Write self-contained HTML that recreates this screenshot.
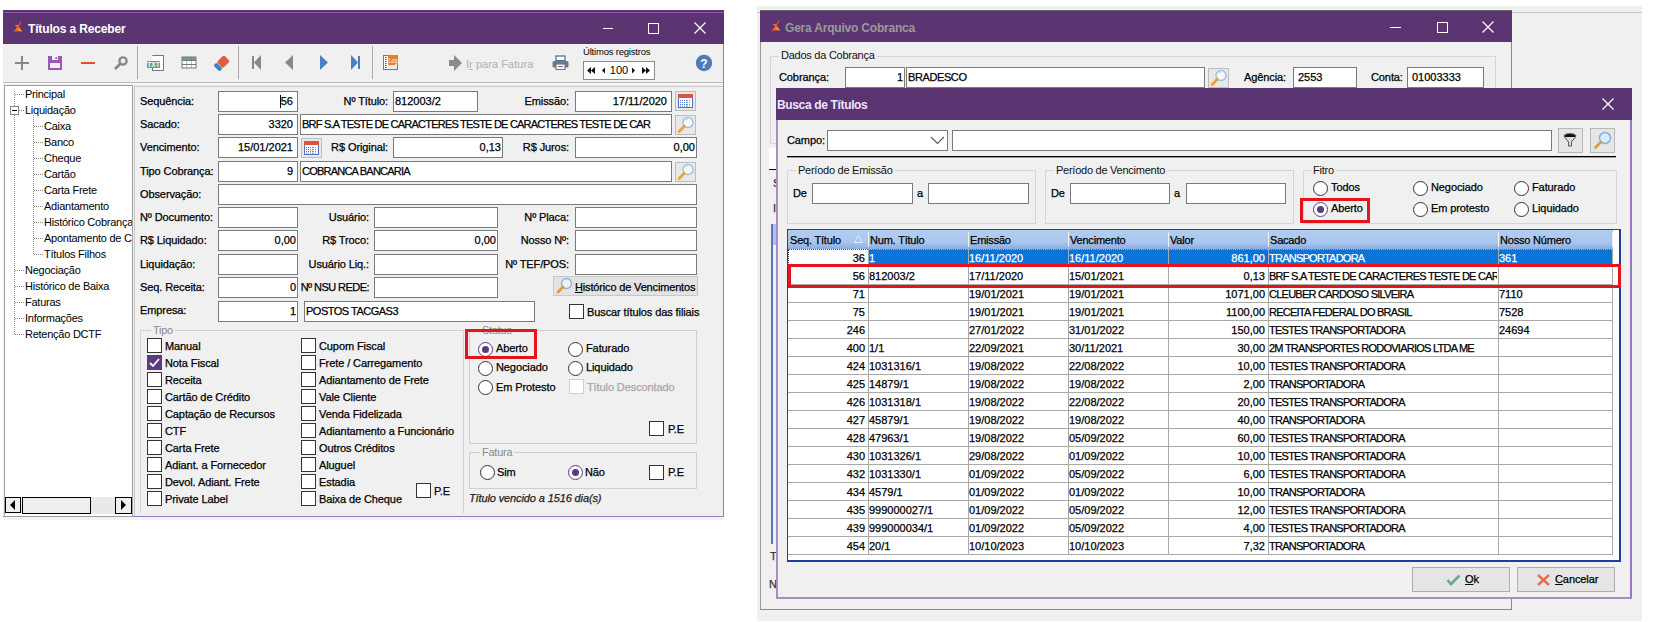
<!DOCTYPE html><html><head><meta charset="utf-8"><style>
*{box-sizing:content-box}
body{margin:0;width:1659px;height:622px;position:relative;overflow:hidden;background:#fff;font-family:"Liberation Sans",sans-serif;font-size:11px;color:#000}
.a{position:absolute}
.t{white-space:pre;line-height:21px;letter-spacing:-0.1px;-webkit-text-stroke:0.25px currentColor}
.inp{background:#fff;border:1px solid #7a7a7a;line-height:19px;white-space:pre;overflow:hidden;letter-spacing:-0.25px;-webkit-text-stroke:0.25px #000}
.cb{position:absolute;width:13px;height:13px;border:1px solid #333;background:#fff}
.rd{position:absolute;width:13px;height:13px;border:1px solid #333;border-radius:50%;background:#fff}
.rd.on{border-color:#5b3a80}
.rd.on:after{content:"";position:absolute;left:3px;top:3px;width:7px;height:7px;border-radius:50%;background:#5b3a80}
.gb{position:absolute;border:1px solid #d5d5d5}
.gt{position:absolute;background:#f0f0f0;padding:0 2px;line-height:13px;white-space:pre;letter-spacing:-0.25px}
.up{letter-spacing:-0.7px}
</style></head><body>

<div class="a" style="left:3px;top:10px;width:721px;height:507px;background:#f0f0f0"></div>
<div class="a" style="left:3px;top:10px;width:721px;height:34px;background:#5b3571"></div>
<div class="a" style="left:723px;top:44px;width:1px;height:473px;background:#9b7cc2"></div>
<div class="a" style="left:3px;top:516px;width:721px;height:1px;background:#9b7cc2"></div>
<div class="a" style="left:3px;top:517px;width:721px;height:3px;background:#f3f3f3"></div>
<svg class="a" style="left:8px;top:17px" width="20" height="20" viewBox="0 0 20 20"><defs><linearGradient id="lg" x1="0" y1="0" x2="1" y2="0"><stop offset="0" stop-color="#e8402a"/><stop offset="0.45" stop-color="#f06a2a"/><stop offset="1" stop-color="#f8c02a"/></linearGradient></defs><path d="M10.9 10 L14.2 14.6 Q10 13.7 5.2 15.2 L9.4 9.8 Z" fill="url(#lg)"/><path d="M13 3.8 L13.6 4.4 L10.6 10.6 L8.6 10.6 Z" fill="#ee4a2a"/><path d="M6.8 8.4 L9.8 8.2 L9.2 10 Z" fill="#f6b82a"/></svg>
<div class="a" style="left:3px;top:12px;width:721px;height:1px;background:#8a5db0"></div>
<div class="a" style="left:28px;top:21px;font:bold 12px 'Liberation Sans';color:#fff;letter-spacing:-0.15px;line-height:17px;white-space:pre">Títulos a Receber</div>
<div class="a" style="left:603px;top:28px;width:10px;height:1px;background:#fff"></div>
<div class="a" style="left:648px;top:23px;width:9px;height:9px;border:1px solid #fff"></div>
<svg class="a" style="left:694px;top:22px" width="12" height="12"><path d="M0.5 0.5 L11.5 11.5 M11.5 0.5 L0.5 11.5" stroke="#fff" stroke-width="1.2"/></svg>
<div class="a" style="left:137px;top:46px;width:1px;height:33px;background:#a9a9a9"></div>
<div class="a" style="left:238px;top:46px;width:1px;height:33px;background:#a9a9a9"></div>
<div class="a" style="left:372px;top:46px;width:1px;height:33px;background:#a9a9a9"></div>
<div class="a" style="left:3px;top:82px;width:720px;height:1px;background:#b9b9b9"></div>
<div class="a" style="left:3px;top:83px;width:720px;height:1px;background:#fbfbfb"></div>
<div class="a" style="left:15px;top:62px;width:14px;height:2px;background:#888"></div>
<div class="a" style="left:21px;top:56px;width:2px;height:14px;background:#888"></div>
<svg class="a" style="left:48px;top:56px" width="14" height="14" viewBox="0 0 14 14"><path d="M0 0H14V14H0Z M2 7V12H12V7Z M4 0V4H10V0Z" fill="#9b59b6" fill-rule="evenodd"/><rect x="7.5" y="1" width="1.5" height="2" fill="#9b59b6"/></svg>
<div class="a" style="left:81px;top:62px;width:14px;height:2px;background:#e0522b"></div>
<svg class="a" style="left:113px;top:55px" width="16" height="16" viewBox="0 0 16 16"><circle cx="10" cy="6" r="3.6" fill="none" stroke="#888" stroke-width="2.4"/><path d="M7.5 8.5 L2 14" stroke="#888" stroke-width="2.6"/></svg>
<svg class="a" style="left:147px;top:55px" width="18" height="17" viewBox="0 0 18 17"><path d="M5.5 0.5H16.5V15.5H5.5" fill="#fff" stroke="#777" stroke-width="1"/><rect x="5" y="1" width="11" height="14" fill="#fff"/><path d="M5.5 0.5H16.5V15.5H5.5V13" fill="none" stroke="#777"/><rect x="0" y="6" width="13" height="7" fill="#5fa58a"/><text x="6.5" y="12" font-family="Liberation Sans" font-weight="bold" font-size="6.5" fill="#fff" text-anchor="middle">TXT</text></svg>
<svg class="a" style="left:181px;top:56px" width="16" height="13" viewBox="0 0 16 13"><rect x="0.5" y="0.5" width="15" height="12" fill="#777"/><rect x="1.5" y="1.5" width="4" height="2.5" fill="#6aa88e"/><rect x="6" y="1.5" width="4" height="2.5" fill="#6aa88e"/><rect x="10.5" y="1.5" width="4" height="2.5" fill="#6aa88e"/><rect x="1.5" y="5" width="4" height="3" fill="#fff"/><rect x="6" y="5" width="4" height="3" fill="#fff"/><rect x="10.5" y="5" width="4" height="3" fill="#fff"/><rect x="1.5" y="9" width="4" height="2.5" fill="#fff"/><rect x="6" y="9" width="4" height="2.5" fill="#fff"/><rect x="10.5" y="9" width="4" height="2.5" fill="#fff"/></svg>
<svg class="a" style="left:214px;top:56px" width="16" height="15" viewBox="0 0 16 15"><g transform="translate(7.8 7.2) rotate(-45)"><rect x="-2.8" y="-4.3" width="10" height="8.6" rx="1.8" fill="#dd6040"/><rect x="-7.6" y="-4.3" width="4.3" height="8.6" rx="1.4" fill="#3f7fc0"/></g></svg>
<svg class="a" style="left:251px;top:55px" width="11" height="16"><rect x="1" y="1" width="2" height="13" fill="#888"/><path d="M10 0 L3 7.5 L10 15 Z" fill="#888"/></svg>
<svg class="a" style="left:284px;top:55px" width="10" height="16"><path d="M9 0 L1 7.5 L9 15 Z" fill="#888"/></svg>
<svg class="a" style="left:319px;top:55px" width="10" height="16"><path d="M1 0 L9 7.5 L1 15 Z" fill="#4a80c0"/></svg>
<svg class="a" style="left:350px;top:55px" width="11" height="16"><path d="M1 0 L8 7.5 L1 15 Z" fill="#4a80c0"/><rect x="8" y="1" width="2" height="13" fill="#4a80c0"/></svg>
<svg class="a" style="left:383px;top:55px" width="15" height="15"><rect x="0.5" y="0.5" width="14" height="14" fill="#fff" stroke="#5a78c0"/><rect x="5" y="10" width="9" height="4" fill="#e2eaf6"/><path d="M2 2.5 H3.5 M2 4.5 H3.5 M2 6.5 H3.5 M2 8.5 H3.5 M2 10.5 H3.5 M2 12.5 H3.5" stroke="#3a58a8"/><rect x="5" y="0" width="10" height="10" rx="1" fill="#e8801e"/><text x="5.6" y="7.6" font-family="Liberation Sans" font-size="7" fill="#fff" textLength="8.8" lengthAdjust="spacingAndGlyphs">Log</text></svg>
<svg class="a" style="left:449px;top:55px" width="14" height="17"><path d="M0 5 H5 V0 L13 8 L5 16 V11 H0 Z" fill="#8a8a8a"/></svg>
<div class="a t" style="left:466px;top:54px;color:#b4b4b4;letter-spacing:0.05px;-webkit-text-stroke:0.1px #b4b4b4">I<u>r</u> para Fatura</div>
<svg class="a" style="left:552px;top:55px" width="17" height="15"><rect x="4" y="1" width="9" height="6" fill="#fff" stroke="#777" stroke-width="1.4"/><rect x="4" y="5" width="9" height="1.5" fill="#3a72b8"/><rect x="0.5" y="6" width="16" height="6.5" rx="1.5" fill="#777"/><rect x="4" y="9" width="9" height="5.5" fill="#fff" stroke="#777" stroke-width="1.2"/><rect x="6" y="11" width="5" height="1" fill="#3a72b8"/></svg>
<div class="a" style="left:583px;top:46px;font-size:9.5px;line-height:12px;white-space:pre;letter-spacing:-0.2px">Últimos registros</div>
<div class="a" style="left:583px;top:61px;width:70px;height:17px;background:#fff;border:1px solid #8a8a8a"></div>
<div class="a" style="left:584px;top:62px;width:70px;height:17px;line-height:17px;font-size:11px;text-align:center;white-space:pre">   100   </div>
<svg class="a" style="left:585px;top:66px" width="68" height="9"><path d="M2 4.5 L6 1 V8Z M6 4.5 L10 1 V8Z M17 4.5 L20 1.5 V7.5Z M47 1.5 L50 4.5 L47 7.5Z M57 1 L61 4.5 L57 8Z M61 1 L65 4.5 L61 8Z" fill="#111"/></svg>
<svg class="a" style="left:695px;top:54px" width="18" height="18"><circle cx="9" cy="9" r="8.2" fill="#4a7db8"/><text x="9" y="13.5" font-family="Liberation Sans" font-weight="bold" font-size="12" fill="#fff" text-anchor="middle">?</text></svg>
<div class="a" style="left:4px;top:85px;width:127px;height:430px;background:#fff;border:1px solid #a0a0a0"></div>
<div class="a" style="left:5px;top:86px;width:127px;height:411px;overflow:hidden">
<div class="a" style="left:20px;top:0px;line-height:16px;white-space:pre;letter-spacing:-0.25px">Principal</div>
<div class="a" style="left:20px;top:16px;line-height:16px;white-space:pre;letter-spacing:-0.25px">Liquidação</div>
<div class="a" style="left:39px;top:32px;line-height:16px;white-space:pre;letter-spacing:-0.25px">Caixa</div>
<div class="a" style="left:39px;top:48px;line-height:16px;white-space:pre;letter-spacing:-0.25px">Banco</div>
<div class="a" style="left:39px;top:64px;line-height:16px;white-space:pre;letter-spacing:-0.25px">Cheque</div>
<div class="a" style="left:39px;top:80px;line-height:16px;white-space:pre;letter-spacing:-0.25px">Cartão</div>
<div class="a" style="left:39px;top:96px;line-height:16px;white-space:pre;letter-spacing:-0.25px">Carta Frete</div>
<div class="a" style="left:39px;top:112px;line-height:16px;white-space:pre;letter-spacing:-0.25px">Adiantamento</div>
<div class="a" style="left:39px;top:128px;line-height:16px;white-space:pre;letter-spacing:-0.25px">Histórico Cobrança</div>
<div class="a" style="left:39px;top:144px;line-height:16px;white-space:pre;letter-spacing:-0.25px">Apontamento de Contas</div>
<div class="a" style="left:39px;top:160px;line-height:16px;white-space:pre;letter-spacing:-0.25px">Títulos Filhos</div>
<div class="a" style="left:20px;top:176px;line-height:16px;white-space:pre;letter-spacing:-0.25px">Negociação</div>
<div class="a" style="left:20px;top:192px;line-height:16px;white-space:pre;letter-spacing:-0.25px">Histórico de Baixa</div>
<div class="a" style="left:20px;top:208px;line-height:16px;white-space:pre;letter-spacing:-0.25px">Faturas</div>
<div class="a" style="left:20px;top:224px;line-height:16px;white-space:pre;letter-spacing:-0.25px">Informações</div>
<div class="a" style="left:20px;top:240px;line-height:16px;white-space:pre;letter-spacing:-0.25px">Retenção DCTF</div>
<svg class="a" style="left:0;top:0" width="127" height="411">
<path d="M9.5 5 V248" stroke="#888" stroke-dasharray="1 1" fill="none"/>
<path d="M28.5 29 V168" stroke="#888" stroke-dasharray="1 1" fill="none"/>
<path d="M10 8.5 H19" stroke="#888" stroke-dasharray="1 1"/>
<path d="M10 24.5 H19" stroke="#888" stroke-dasharray="1 1"/>
<path d="M29 40.5 H38" stroke="#888" stroke-dasharray="1 1"/>
<path d="M29 56.5 H38" stroke="#888" stroke-dasharray="1 1"/>
<path d="M29 72.5 H38" stroke="#888" stroke-dasharray="1 1"/>
<path d="M29 88.5 H38" stroke="#888" stroke-dasharray="1 1"/>
<path d="M29 104.5 H38" stroke="#888" stroke-dasharray="1 1"/>
<path d="M29 120.5 H38" stroke="#888" stroke-dasharray="1 1"/>
<path d="M29 136.5 H38" stroke="#888" stroke-dasharray="1 1"/>
<path d="M29 152.5 H38" stroke="#888" stroke-dasharray="1 1"/>
<path d="M29 168.5 H38" stroke="#888" stroke-dasharray="1 1"/>
<path d="M10 184.5 H19" stroke="#888" stroke-dasharray="1 1"/>
<path d="M10 200.5 H19" stroke="#888" stroke-dasharray="1 1"/>
<path d="M10 216.5 H19" stroke="#888" stroke-dasharray="1 1"/>
<path d="M10 232.5 H19" stroke="#888" stroke-dasharray="1 1"/>
<path d="M10 248.5 H19" stroke="#888" stroke-dasharray="1 1"/>
<rect x="5.5" y="20.5" width="8" height="8" fill="#fff" stroke="#888"/><path d="M7 24.5 H12" stroke="#000"/>
</svg></div>
<div class="a" style="left:5px;top:497px;width:126px;height:17px;background:#f4f4f4"></div>
<div class="a" style="left:5px;top:497px;width:16px;height:16px;background:#efefef;border:1px solid #000;box-sizing:border-box"></div>
<div class="a" style="left:22px;top:497px;width:69px;height:17px;background:#efefef;border:1.5px solid #000;box-sizing:border-box"></div>
<div class="a" style="left:91px;top:497px;width:24px;height:17px;background:#e9e9e9"></div>
<div class="a" style="left:115px;top:497px;width:17px;height:17px;background:#efefef;border:1px solid #000;box-sizing:border-box"></div>
<svg class="a" style="left:10px;top:500px" width="6" height="10"><path d="M5 0 L0 5 L5 10Z" fill="#000"/></svg>
<svg class="a" style="left:121px;top:500px" width="6" height="10"><path d="M0 0 L5 5 L0 10Z" fill="#000"/></svg>
<div class="a" style="left:134px;top:86px;width:588px;height:429px;border-left:1px solid #c8c8c8;border-top:1px solid #c8c8c8"></div>
<div class="a t" style="left:140px;top:91px;">Sequência:</div>
<div class="a inp" style="left:218px;top:91px;width:78px;height:19px;text-align:right;"><span style="padding-right:4px;letter-spacing:0">56</span></div>
<div class="a t" style="left:140px;top:114px;">Sacado:</div>
<div class="a inp" style="left:218px;top:114px;width:78px;height:19px;text-align:right;"><span style="padding-right:4px;letter-spacing:0">3320</span></div>
<div class="a t" style="left:140px;top:137px;">Vencimento:</div>
<div class="a inp" style="left:218px;top:137px;width:78px;height:19px;text-align:right;"><span style="padding-right:4px;letter-spacing:0">15/01/2021</span></div>
<div class="a t" style="left:140px;top:161px;">Tipo Cobrança:</div>
<div class="a inp" style="left:218px;top:161px;width:78px;height:19px;text-align:right;"><span style="padding-right:4px;letter-spacing:0">9</span></div>
<div class="a t" style="left:140px;top:184px;">Observação:</div>
<div class="a t" style="left:140px;top:207px;">Nº Documento:</div>
<div class="a inp" style="left:218px;top:207px;width:78px;height:19px;text-align:right;"><span style="padding-right:1px;"></span></div>
<div class="a t" style="left:140px;top:230px;">R$ Liquidado:</div>
<div class="a inp" style="left:218px;top:230px;width:78px;height:19px;text-align:right;"><span style="padding-right:1px;letter-spacing:0">0,00</span></div>
<div class="a t" style="left:140px;top:254px;">Liquidação:</div>
<div class="a inp" style="left:218px;top:254px;width:78px;height:19px;text-align:right;"><span style="padding-right:1px;"></span></div>
<div class="a t" style="left:140px;top:277px;">Seq. Receita:</div>
<div class="a inp" style="left:218px;top:277px;width:78px;height:19px;text-align:right;"><span style="padding-right:1px;letter-spacing:0">0</span></div>
<div class="a t" style="left:140px;top:300px;">Empresa:</div>
<div class="a inp" style="left:218px;top:301px;width:78px;height:19px;text-align:right;"><span style="padding-right:1px;letter-spacing:0">1</span></div>
<div class="a inp" style="left:218px;top:184px;width:477px;height:19px;text-align:left;"><span style="padding-left:1px;"></span></div>
<div class="a" style="left:280px;top:95px;width:1px;height:13px;background:#000"></div>
<div class="a t" style="right:1271px;top:91px;text-align:right;">Nº Título:</div>
<div class="a inp" style="left:393px;top:91px;width:83px;height:19px;text-align:left;"><span style="padding-left:1px;letter-spacing:0">812003/2</span></div>
<div class="a t" style="right:1090px;top:91px;text-align:right;">Emissão:</div>
<div class="a inp" style="left:575px;top:91px;width:95px;height:19px;text-align:right;"><span style="padding-right:4px;letter-spacing:0">17/11/2020</span></div>
<div class="a" style="left:675px;top:91px;width:19px;height:18px;background:#e8e8e8;border:1px solid #bdbdbd"></div>
<svg class="a" style="left:678px;top:94px" width="15" height="14"><rect x="0.5" y="0.5" width="14" height="13" fill="#fff" stroke="#5a70c0"/><rect x="0" y="0" width="15" height="4" fill="#d9534a"/><path d="M2 6.5H9 M2 8.5H9 M2 10.5H9 M2 12.2H9" stroke="#5a78c8" stroke-dasharray="1 1"/><path d="M9 6.5H13 M9 8.5H13 M9 10.5H13 M9 12.2H13" stroke="#e07a6a" stroke-dasharray="1 1"/></svg>
<div class="a inp" style="left:300px;top:114px;width:370px;height:19px;text-align:left;"><span style="padding-left:1px;letter-spacing:-0.78px">BRF S.A TESTE DE CARACTERES TESTE DE CARACTERES TESTE DE CAR</span></div>
<div class="a" style="left:675px;top:115px;width:19px;height:18px;background:#e8e8e8;border:1px solid #bdbdbd"></div>
<svg class="a" style="left:677px;top:116px" width="18" height="18"><circle cx="11" cy="6.5" r="5" fill="#f2f8fd" stroke="#9cc0e0" stroke-width="1.4"/><path d="M8.5 4.5 A3 3 0 0 1 11 2.8" stroke="#b8d4ee" fill="none"/><path d="M7.2 10.3 L2.2 15.5" stroke="#eea52a" stroke-width="2.8" stroke-linecap="round"/></svg>
<div class="a" style="left:301px;top:138px;width:19px;height:18px;background:#e8e8e8;border:1px solid #bdbdbd"></div>
<svg class="a" style="left:304px;top:141px" width="15" height="14"><rect x="0.5" y="0.5" width="14" height="13" fill="#fff" stroke="#5a70c0"/><rect x="0" y="0" width="15" height="4" fill="#d9534a"/><path d="M2 6.5H9 M2 8.5H9 M2 10.5H9 M2 12.2H9" stroke="#5a78c8" stroke-dasharray="1 1"/><path d="M9 6.5H13 M9 8.5H13 M9 10.5H13 M9 12.2H13" stroke="#e07a6a" stroke-dasharray="1 1"/></svg>
<div class="a t" style="right:1271px;top:137px;text-align:right;">R$ Original:</div>
<div class="a inp" style="left:393px;top:137px;width:108px;height:19px;text-align:right;"><span style="padding-right:1px;letter-spacing:0">0,13</span></div>
<div class="a t" style="right:1090px;top:137px;text-align:right;">R$ Juros:</div>
<div class="a inp" style="left:575px;top:137px;width:120px;height:19px;text-align:right;"><span style="padding-right:1px;letter-spacing:0">0,00</span></div>
<div class="a inp" style="left:300px;top:161px;width:370px;height:19px;text-align:left;"><span style="padding-left:1px;letter-spacing:-0.78px">COBRANCA BANCARIA</span></div>
<div class="a" style="left:675px;top:162px;width:19px;height:18px;background:#e8e8e8;border:1px solid #bdbdbd"></div>
<svg class="a" style="left:677px;top:163px" width="18" height="18"><circle cx="11" cy="6.5" r="5" fill="#f2f8fd" stroke="#9cc0e0" stroke-width="1.4"/><path d="M8.5 4.5 A3 3 0 0 1 11 2.8" stroke="#b8d4ee" fill="none"/><path d="M7.2 10.3 L2.2 15.5" stroke="#eea52a" stroke-width="2.8" stroke-linecap="round"/></svg>
<div class="a t" style="right:1290px;top:207px;text-align:right;">Usuário:</div>
<div class="a inp" style="left:374px;top:207px;width:122px;height:19px;text-align:right;"><span style="padding-right:1px;"></span></div>
<div class="a t" style="right:1290px;top:230px;text-align:right;">R$ Troco:</div>
<div class="a inp" style="left:374px;top:230px;width:122px;height:19px;text-align:right;"><span style="padding-right:1px;letter-spacing:0">0,00</span></div>
<div class="a t" style="right:1290px;top:254px;text-align:right;">Usuário Liq.:</div>
<div class="a inp" style="left:374px;top:254px;width:122px;height:19px;text-align:right;"><span style="padding-right:1px;"></span></div>
<div class="a t" style="right:1290px;top:277px;text-align:right;letter-spacing:-0.55px">Nº NSU REDE:</div>
<div class="a inp" style="left:374px;top:277px;width:122px;height:19px;text-align:right;"><span style="padding-right:1px;"></span></div>
<div class="a t" style="right:1090px;top:207px;text-align:right;">Nº Placa:</div>
<div class="a inp" style="left:575px;top:207px;width:120px;height:19px;text-align:left;"><span style="padding-left:1px;"></span></div>
<div class="a t" style="right:1090px;top:230px;text-align:right;">Nosso Nº:</div>
<div class="a inp" style="left:575px;top:230px;width:120px;height:19px;text-align:left;"><span style="padding-left:1px;"></span></div>
<div class="a t" style="right:1090px;top:254px;text-align:right;">Nº TEF/POS:</div>
<div class="a inp" style="left:575px;top:254px;width:120px;height:19px;text-align:left;"><span style="padding-left:1px;"></span></div>
<div class="a" style="left:553px;top:276px;width:143px;height:18px;background:#e3e3e3;border:1px solid #c8c8c8"></div>
<svg class="a" style="left:556px;top:277px" width="17" height="17"><circle cx="10.5" cy="6.5" r="5" fill="#e9f3fb" stroke="#8fb0cc" stroke-width="1.3"/><path d="M7 10 L2 15" stroke="#e39a2a" stroke-width="2.6" stroke-linecap="round"/></svg>
<div class="a t" style="left:575px;top:276.5px;line-height:21px;letter-spacing:-0.16px"><u>H</u>istórico de Vencimentos</div>
<div class="a inp" style="left:304px;top:301px;width:229px;height:19px;text-align:left;"><span style="padding-left:1px;letter-spacing:-0.5px">POSTOS TACGAS3</span></div>
<div class="cb" style="left:569px;top:304px"></div>
<div class="a t" style="left:587px;top:302px;">Buscar títulos das filiais</div>
<div class="a" style="left:140px;top:330px;width:322px;height:182px;border-top:1px solid #d0d0d0;border-left:1px solid #d0d0d0;border-right:1px solid #d0d0d0"></div>
<div class="gt" style="left:151px;top:324px;color:#8a8a8a">Tipo</div>
<div class="cb" style="left:147px;top:338px"></div>
<div class="a t" style="left:165px;top:336.5px;line-height:19px">Manual</div>
<div class="cb" style="left:301px;top:338px"></div>
<div class="a t" style="left:319px;top:336.5px;line-height:19px">Cupom Fiscal</div>
<div class="cb" style="left:147px;top:355px;background:#5b3a80;border-color:#5b3a80"></div>
<svg class="a" style="left:148px;top:357px" width="13" height="11"><path d="M2 6 L5 9 L11 2" stroke="#fff" stroke-width="1.8" fill="none"/></svg>
<div class="a t" style="left:165px;top:353.5px;line-height:19px">Nota Fiscal</div>
<div class="cb" style="left:301px;top:355px"></div>
<div class="a t" style="left:319px;top:353.5px;line-height:19px">Frete / Carregamento</div>
<div class="cb" style="left:147px;top:372px"></div>
<div class="a t" style="left:165px;top:370.5px;line-height:19px">Receita</div>
<div class="cb" style="left:301px;top:372px"></div>
<div class="a t" style="left:319px;top:370.5px;line-height:19px">Adiantamento de Frete</div>
<div class="cb" style="left:147px;top:389px"></div>
<div class="a t" style="left:165px;top:387.5px;line-height:19px">Cartão de Crédito</div>
<div class="cb" style="left:301px;top:389px"></div>
<div class="a t" style="left:319px;top:387.5px;line-height:19px">Vale Cliente</div>
<div class="cb" style="left:147px;top:406px"></div>
<div class="a t" style="left:165px;top:404.5px;line-height:19px">Captação de Recursos</div>
<div class="cb" style="left:301px;top:406px"></div>
<div class="a t" style="left:319px;top:404.5px;line-height:19px">Venda Fidelizada</div>
<div class="cb" style="left:147px;top:423px"></div>
<div class="a t" style="left:165px;top:421.5px;line-height:19px">CTF</div>
<div class="cb" style="left:301px;top:423px"></div>
<div class="a t" style="left:319px;top:421.5px;line-height:19px">Adiantamento a Funcionário</div>
<div class="cb" style="left:147px;top:440px"></div>
<div class="a t" style="left:165px;top:438.5px;line-height:19px">Carta Frete</div>
<div class="cb" style="left:301px;top:440px"></div>
<div class="a t" style="left:319px;top:438.5px;line-height:19px">Outros Créditos</div>
<div class="cb" style="left:147px;top:457px"></div>
<div class="a t" style="left:165px;top:455.5px;line-height:19px">Adiant. a Fornecedor</div>
<div class="cb" style="left:301px;top:457px"></div>
<div class="a t" style="left:319px;top:455.5px;line-height:19px">Aluguel</div>
<div class="cb" style="left:147px;top:474px"></div>
<div class="a t" style="left:165px;top:472.5px;line-height:19px">Devol. Adiant. Frete</div>
<div class="cb" style="left:301px;top:474px"></div>
<div class="a t" style="left:319px;top:472.5px;line-height:19px">Estadia</div>
<div class="cb" style="left:147px;top:491px"></div>
<div class="a t" style="left:165px;top:489.5px;line-height:19px">Private Label</div>
<div class="cb" style="left:301px;top:491px"></div>
<div class="a t" style="left:319px;top:489.5px;line-height:19px">Baixa de Cheque</div>
<div class="cb" style="left:416px;top:483px"></div>
<div class="a t" style="left:434px;top:481.5px;line-height:19px">P.E</div>
<div class="a" style="left:469px;top:330px;width:226px;height:112px;border:1px solid #d0d0d0"></div>
<div class="gt" style="left:480px;top:324px;color:#8a8a8a">Status</div>
<div class="rd on" style="left:478px;top:342px"></div>
<div class="a t" style="left:496px;top:339px;line-height:19px">Aberto</div>
<div class="rd" style="left:568px;top:342px"></div>
<div class="a t" style="left:586px;top:339px;line-height:19px">Faturado</div>
<div class="rd" style="left:478px;top:361px"></div>
<div class="a t" style="left:496px;top:358px;line-height:19px">Negociado</div>
<div class="rd" style="left:568px;top:361px"></div>
<div class="a t" style="left:586px;top:358px;line-height:19px">Liquidado</div>
<div class="rd" style="left:478px;top:380px"></div>
<div class="a t" style="left:496px;top:377.5px;line-height:19px">Em Protesto</div>
<div class="cb" style="left:569px;top:379px;border-color:#cfcfcf"></div>
<div class="a t" style="left:587px;top:377.5px;line-height:19px;color:#a8a8a8">Título Descontado</div>
<div class="cb" style="left:649px;top:421px"></div>
<div class="a t" style="left:668px;top:419.5px;line-height:19px">P.E</div>
<div class="a" style="left:465px;top:329px;width:66px;height:24px;border:3px solid #e3141c"></div>
<div class="a" style="left:469px;top:452px;width:226px;height:35px;border:1px solid #d0d0d0"></div>
<div class="gt" style="left:480px;top:446px;color:#8a8a8a">Fatura</div>
<div class="rd" style="left:480px;top:465px"></div>
<div class="a t" style="left:497px;top:463px;line-height:19px">Sim</div>
<div class="rd on" style="left:568px;top:465px"></div>
<div class="a t" style="left:585px;top:463px;line-height:19px">Não</div>
<div class="cb" style="left:649px;top:465px"></div>
<div class="a t" style="left:668px;top:463px;line-height:19px">P.E</div>
<div class="a t" style="left:469px;top:489px;font-style:italic;line-height:19px;color:#222;letter-spacing:-0.12px">Título vencido a 1516 dia(s)</div>
<div class="a" style="left:757px;top:6px;width:885px;height:615px;background:#f0f0f0"></div>
<div class="a" style="left:757px;top:12px;width:885px;height:1px;background:#c6c6c6"></div>
<div class="a" style="left:760px;top:10px;width:752px;height:600px;background:#f0f0f0"></div>
<div class="a" style="left:760px;top:10px;width:1px;height:600px;background:#9a9a9a"></div>
<div class="a" style="left:1511px;top:10px;width:1px;height:600px;background:#8a8a8a"></div>
<div class="a" style="left:760px;top:609px;width:752px;height:1px;background:#8a8a8a"></div>
<div class="a" style="left:760px;top:10px;width:752px;height:32px;background:#5b3571;border-top:1px solid #6a6a6a;box-sizing:border-box"></div>
<svg class="a" style="left:766px;top:16px" width="20" height="20" viewBox="0 0 20 20"><path d="M10.9 10 L14.2 14.6 Q10 13.7 5.2 15.2 L9.4 9.8 Z" fill="url(#lg)"/><path d="M13 3.8 L13.6 4.4 L10.6 10.6 L8.6 10.6 Z" fill="#ee4a2a"/><path d="M6.8 8.4 L9.8 8.2 L9.2 10 Z" fill="#f6b82a"/></svg>
<div class="a" style="left:785px;top:20px;font:bold 12px 'Liberation Sans';color:#9a9a9a;letter-spacing:-0.2px;line-height:17px;white-space:pre">Gera Arquivo Cobranca</div>
<div class="a" style="left:1390px;top:27px;width:11px;height:1px;background:#fff"></div>
<div class="a" style="left:1437px;top:22px;width:9px;height:9px;border:1px solid #fff"></div>
<svg class="a" style="left:1482px;top:21px" width="12" height="12"><path d="M0.5 0.5 L11.5 11.5 M11.5 0.5 L0.5 11.5" stroke="#fff" stroke-width="1.2"/></svg>
<div class="a" style="left:770px;top:56px;width:724px;height:86px;border:1px solid #d5d5d5"></div>
<div class="gt" style="left:779px;top:49px;color:#111">Dados da Cobrança</div>
<div class="a t" style="left:779px;top:67px;line-height:21px">Cobrança:</div>
<div class="a inp" style="left:845px;top:67px;width:58px;height:19px;text-align:right;"><span style="padding-right:1px;letter-spacing:0">1</span></div>
<div class="a inp" style="left:906px;top:67px;width:297px;height:19px;text-align:left;"><span style="padding-left:1px;letter-spacing:-0.4px">BRADESCO</span></div>
<div class="a" style="left:1208px;top:68px;width:19px;height:18px;background:#e8e8e8;border:1px solid #bdbdbd"></div>
<svg class="a" style="left:1210px;top:69px" width="18" height="18"><circle cx="11" cy="6.5" r="5" fill="#f2f8fd" stroke="#9cc0e0" stroke-width="1.4"/><path d="M8.5 4.5 A3 3 0 0 1 11 2.8" stroke="#b8d4ee" fill="none"/><path d="M7.2 10.3 L2.2 15.5" stroke="#eea52a" stroke-width="2.8" stroke-linecap="round"/></svg>
<div class="a t" style="left:1244px;top:67px;">Agência:</div>
<div class="a inp" style="left:1293px;top:67px;width:62px;height:19px;text-align:left;"><span style="padding-left:1px;letter-spacing:0;padding-left:4px">2553</span></div>
<div class="a t" style="left:1371px;top:67px;">Conta:</div>
<div class="a inp" style="left:1407px;top:67px;width:75px;height:19px;text-align:left;"><span style="padding-left:1px;letter-spacing:0;padding-left:4px">01003333</span></div>
<div class="a" style="left:769px;top:148px;width:8px;height:21px;background:#fff"></div>
<div class="a" style="left:769px;top:169px;width:8px;height:1px;background:#000"></div>
<div class="a t" style="left:773px;top:173px;color:#333">S</div>
<div class="a t" style="left:773px;top:198px;color:#333">I</div>
<div class="a" style="left:771px;top:224px;width:2px;height:320px;background:#5a78c0"></div>
<div class="a" style="left:773px;top:224px;width:4px;height:21px;background:#aac4ec"></div>
<div class="a t" style="left:770px;top:546px;color:#333">T</div>
<div class="a t" style="left:769px;top:574px;color:#333">N</div>
<div class="a" style="left:776px;top:88px;width:856px;height:511px;background:#f0f0f0"></div>
<div class="a" style="left:776px;top:119px;width:2px;height:480px;background:#a88cc8"></div>
<div class="a" style="left:1630px;top:88px;width:2px;height:511px;background:#9a78c0"></div>
<div class="a" style="left:776px;top:597px;width:856px;height:2px;background:#a88cc8"></div>
<div class="a" style="left:776px;top:88px;width:856px;height:32px;background:#5b3571"></div>
<div class="a" style="left:777px;top:97px;font:bold 12px 'Liberation Sans';color:#ece6ff;letter-spacing:-0.35px;line-height:17px;white-space:pre">Busca de Títulos</div>
<svg class="a" style="left:1602px;top:98px" width="12" height="12"><path d="M0.5 0.5 L11.5 11.5 M11.5 0.5 L0.5 11.5" stroke="#fff" stroke-width="1.2"/></svg>
<div class="a t" style="left:787px;top:130px;">Campo:</div>
<div class="a inp" style="left:827px;top:130px;width:119px;height:19px;text-align:left;"><span style="padding-left:1px;"></span></div>
<svg class="a" style="left:930px;top:136px" width="15" height="9"><path d="M1 1 L7.5 7.5 L14 1" stroke="#555" fill="none" stroke-width="1.1"/></svg>
<div class="a inp" style="left:952px;top:130px;width:598px;height:19px;text-align:left;"><span style="padding-left:1px;"></span></div>
<div class="a" style="left:1558px;top:128px;width:23px;height:23px;background:#e6e6e6;border:1px solid #b8b8b8"></div>
<svg class="a" style="left:1563px;top:133px" width="14" height="14"><ellipse cx="7" cy="3" rx="6" ry="2.5" fill="#111" stroke="#777"/><path d="M1.5 4 L5.5 9 V13 H8.5 V9 L12.5 4" fill="#ddd" stroke="#555"/></svg>
<div class="a" style="left:1590px;top:128px;width:23px;height:23px;background:#e6e6e6;border:1px solid #b8b8b8"></div>
<svg class="a" style="left:1593px;top:131px" width="19" height="19"><circle cx="12" cy="7" r="5.5" fill="#d8eefc" stroke="#7fb0d8" stroke-width="1.5"/><path d="M8 11 L2.5 16.5" stroke="#e49a2c" stroke-width="2.8" stroke-linecap="round"/></svg>
<div class="a" style="left:787px;top:156px;width:829px;height:1px;background:#000"></div>
<div class="a" style="left:787px;top:157px;width:829px;height:1px;background:#999"></div>
<div class="a" style="left:787px;top:170px;width:247px;height:52px;border:1px solid #d5d5d5"></div>
<div class="gt" style="left:796px;top:164px;color:#111">Período de Emissão</div>
<div class="a t" style="left:793px;top:183px;">De</div>
<div class="a inp" style="left:812px;top:183px;width:99px;height:19px;text-align:left;"><span style="padding-left:1px;"></span></div>
<div class="a t" style="left:917px;top:183px;">a</div>
<div class="a inp" style="left:928px;top:183px;width:99px;height:19px;text-align:left;"><span style="padding-left:1px;"></span></div>
<div class="a" style="left:1045px;top:170px;width:247px;height:52px;border:1px solid #d5d5d5"></div>
<div class="gt" style="left:1054px;top:164px;color:#111">Período de Vencimento</div>
<div class="a t" style="left:1051px;top:183px;">De</div>
<div class="a inp" style="left:1070px;top:183px;width:98px;height:19px;text-align:left;"><span style="padding-left:1px;"></span></div>
<div class="a t" style="left:1174px;top:183px;">a</div>
<div class="a inp" style="left:1186px;top:183px;width:98px;height:19px;text-align:left;"><span style="padding-left:1px;"></span></div>
<div class="a" style="left:1303px;top:170px;width:312px;height:52px;border:1px solid #d5d5d5"></div>
<div class="gt" style="left:1311px;top:164px;color:#111">Fitro</div>
<div class="rd" style="left:1313px;top:181px"></div>
<div class="a t" style="left:1331px;top:178px;line-height:19px">Todos</div>
<div class="rd on" style="left:1313px;top:202px"></div>
<div class="a t" style="left:1331px;top:199px;line-height:19px">Aberto</div>
<div class="rd" style="left:1413px;top:181px"></div>
<div class="a t" style="left:1431px;top:178px;line-height:19px">Negociado</div>
<div class="rd" style="left:1413px;top:202px"></div>
<div class="a t" style="left:1431px;top:199px;line-height:19px">Em protesto</div>
<div class="rd" style="left:1514px;top:181px"></div>
<div class="a t" style="left:1532px;top:178px;line-height:19px">Faturado</div>
<div class="rd" style="left:1514px;top:202px"></div>
<div class="a t" style="left:1532px;top:199px;line-height:19px">Liquidado</div>
<div class="a" style="left:1300px;top:198px;width:64px;height:19px;border:3px solid #e3141c"></div>
<div class="a" style="left:787px;top:229px;width:831px;height:330px;background:#fff;border:1px solid #1e3fa0;border-width:1px 2px 2px 1px"></div>
<div class="a" style="left:788px;top:230px;width:825px;height:19px;background:linear-gradient(#b3cdf1,#aac6ee 65%,#8aacdf)"></div>
<div class="a t" style="left:790px;top:231px;line-height:18px;letter-spacing:-0.2px">Seq. Título</div>
<div class="a t" style="left:870px;top:231px;line-height:18px;letter-spacing:-0.2px">Num. Título</div>
<div class="a" style="left:868px;top:232px;width:1px;height:15px;background:#e8f0fb"></div>
<div class="a t" style="left:970px;top:231px;line-height:18px;letter-spacing:-0.2px">Emissão</div>
<div class="a" style="left:968px;top:232px;width:1px;height:15px;background:#e8f0fb"></div>
<div class="a t" style="left:1070px;top:231px;line-height:18px;letter-spacing:-0.2px">Vencimento</div>
<div class="a" style="left:1068px;top:232px;width:1px;height:15px;background:#e8f0fb"></div>
<div class="a t" style="left:1170px;top:231px;line-height:18px;letter-spacing:-0.2px">Valor</div>
<div class="a" style="left:1168px;top:232px;width:1px;height:15px;background:#e8f0fb"></div>
<div class="a t" style="left:1270px;top:231px;line-height:18px;letter-spacing:-0.2px">Sacado</div>
<div class="a" style="left:1268px;top:232px;width:1px;height:15px;background:#e8f0fb"></div>
<div class="a t" style="left:1500px;top:231px;line-height:18px;letter-spacing:-0.2px">Nosso Número</div>
<div class="a" style="left:1498px;top:232px;width:1px;height:15px;background:#e8f0fb"></div>
<div class="a" style="left:1612px;top:232px;width:1px;height:15px;background:#e8f0fb"></div>
<svg class="a" style="left:854px;top:235px" width="9" height="8"><path d="M4.5 0.5 L8.5 7.5 H0.5Z" fill="none" stroke="#dde8f8" stroke-width="1"/></svg>
<div class="a" style="left:868px;top:249px;width:744px;height:17px;background:#0a74d8"></div>
<div class="a" style="left:788px;top:266px;width:825px;height:1px;background:#a9a9a9"></div>
<div class="a t" style="left:788px;width:77px;top:250px;line-height:17px;text-align:right;color:#000;letter-spacing:0;">36</div>
<div class="a t" style="left:869px;width:98px;overflow:hidden;top:250px;line-height:17px;color:#fff;letter-spacing:0;">1</div>
<div class="a t" style="left:969px;width:98px;overflow:hidden;top:250px;line-height:17px;color:#fff;letter-spacing:0;">16/11/2020</div>
<div class="a t" style="left:1069px;width:98px;overflow:hidden;top:250px;line-height:17px;color:#fff;letter-spacing:0;">16/11/2020</div>
<div class="a t" style="left:1168px;width:97px;top:250px;line-height:17px;text-align:right;color:#fff;letter-spacing:0;">861,00</div>
<div class="a t" style="left:1269px;width:228px;overflow:hidden;top:250px;line-height:17px;color:#fff;letter-spacing:-0.75px;">TRANSPORTADORA</div>
<div class="a t" style="left:1499px;width:112px;overflow:hidden;top:250px;line-height:17px;color:#fff;letter-spacing:0;">361</div>
<div class="a" style="left:788px;top:284px;width:825px;height:1px;background:#a9a9a9"></div>
<div class="a t" style="left:788px;width:77px;top:268px;line-height:17px;text-align:right;color:#000;letter-spacing:0;">56</div>
<div class="a t" style="left:869px;width:98px;overflow:hidden;top:268px;line-height:17px;color:#000;letter-spacing:0;">812003/2</div>
<div class="a t" style="left:969px;width:98px;overflow:hidden;top:268px;line-height:17px;color:#000;letter-spacing:0;">17/11/2020</div>
<div class="a t" style="left:1069px;width:98px;overflow:hidden;top:268px;line-height:17px;color:#000;letter-spacing:0;">15/01/2021</div>
<div class="a t" style="left:1168px;width:97px;top:268px;line-height:17px;text-align:right;color:#000;letter-spacing:0;">0,13</div>
<div class="a t" style="left:1269px;width:228px;overflow:hidden;top:268px;line-height:17px;color:#000;letter-spacing:-0.75px;">BRF S.A TESTE DE CARACTERES TESTE DE CARACTERES</div>
<div class="a" style="left:788px;top:302px;width:825px;height:1px;background:#a9a9a9"></div>
<div class="a t" style="left:788px;width:77px;top:286px;line-height:17px;text-align:right;color:#000;letter-spacing:0;">71</div>
<div class="a t" style="left:969px;width:98px;overflow:hidden;top:286px;line-height:17px;color:#000;letter-spacing:0;">19/01/2021</div>
<div class="a t" style="left:1069px;width:98px;overflow:hidden;top:286px;line-height:17px;color:#000;letter-spacing:0;">19/01/2021</div>
<div class="a t" style="left:1168px;width:97px;top:286px;line-height:17px;text-align:right;color:#000;letter-spacing:0;">1071,00</div>
<div class="a t" style="left:1269px;width:228px;overflow:hidden;top:286px;line-height:17px;color:#000;letter-spacing:-0.75px;">CLEUBER CARDOSO SILVEIRA</div>
<div class="a t" style="left:1499px;width:112px;overflow:hidden;top:286px;line-height:17px;color:#000;letter-spacing:0;">7110</div>
<div class="a" style="left:788px;top:320px;width:825px;height:1px;background:#a9a9a9"></div>
<div class="a t" style="left:788px;width:77px;top:304px;line-height:17px;text-align:right;color:#000;letter-spacing:0;">75</div>
<div class="a t" style="left:969px;width:98px;overflow:hidden;top:304px;line-height:17px;color:#000;letter-spacing:0;">19/01/2021</div>
<div class="a t" style="left:1069px;width:98px;overflow:hidden;top:304px;line-height:17px;color:#000;letter-spacing:0;">19/01/2021</div>
<div class="a t" style="left:1168px;width:97px;top:304px;line-height:17px;text-align:right;color:#000;letter-spacing:0;">1100,00</div>
<div class="a t" style="left:1269px;width:228px;overflow:hidden;top:304px;line-height:17px;color:#000;letter-spacing:-0.75px;">RECEITA FEDERAL DO BRASIL</div>
<div class="a t" style="left:1499px;width:112px;overflow:hidden;top:304px;line-height:17px;color:#000;letter-spacing:0;">7528</div>
<div class="a" style="left:788px;top:338px;width:825px;height:1px;background:#a9a9a9"></div>
<div class="a t" style="left:788px;width:77px;top:322px;line-height:17px;text-align:right;color:#000;letter-spacing:0;">246</div>
<div class="a t" style="left:969px;width:98px;overflow:hidden;top:322px;line-height:17px;color:#000;letter-spacing:0;">27/01/2022</div>
<div class="a t" style="left:1069px;width:98px;overflow:hidden;top:322px;line-height:17px;color:#000;letter-spacing:0;">31/01/2022</div>
<div class="a t" style="left:1168px;width:97px;top:322px;line-height:17px;text-align:right;color:#000;letter-spacing:0;">150,00</div>
<div class="a t" style="left:1269px;width:228px;overflow:hidden;top:322px;line-height:17px;color:#000;letter-spacing:-0.75px;">TESTES TRANSPORTADORA</div>
<div class="a t" style="left:1499px;width:112px;overflow:hidden;top:322px;line-height:17px;color:#000;letter-spacing:0;">24694</div>
<div class="a" style="left:788px;top:356px;width:825px;height:1px;background:#a9a9a9"></div>
<div class="a t" style="left:788px;width:77px;top:340px;line-height:17px;text-align:right;color:#000;letter-spacing:0;">400</div>
<div class="a t" style="left:869px;width:98px;overflow:hidden;top:340px;line-height:17px;color:#000;letter-spacing:0;">1/1</div>
<div class="a t" style="left:969px;width:98px;overflow:hidden;top:340px;line-height:17px;color:#000;letter-spacing:0;">22/09/2021</div>
<div class="a t" style="left:1069px;width:98px;overflow:hidden;top:340px;line-height:17px;color:#000;letter-spacing:0;">30/11/2021</div>
<div class="a t" style="left:1168px;width:97px;top:340px;line-height:17px;text-align:right;color:#000;letter-spacing:0;">30,00</div>
<div class="a t" style="left:1269px;width:228px;overflow:hidden;top:340px;line-height:17px;color:#000;letter-spacing:-0.75px;">2M TRANSPORTES RODOVIARIOS LTDA ME</div>
<div class="a" style="left:788px;top:374px;width:825px;height:1px;background:#a9a9a9"></div>
<div class="a t" style="left:788px;width:77px;top:358px;line-height:17px;text-align:right;color:#000;letter-spacing:0;">424</div>
<div class="a t" style="left:869px;width:98px;overflow:hidden;top:358px;line-height:17px;color:#000;letter-spacing:0;">1031316/1</div>
<div class="a t" style="left:969px;width:98px;overflow:hidden;top:358px;line-height:17px;color:#000;letter-spacing:0;">19/08/2022</div>
<div class="a t" style="left:1069px;width:98px;overflow:hidden;top:358px;line-height:17px;color:#000;letter-spacing:0;">22/08/2022</div>
<div class="a t" style="left:1168px;width:97px;top:358px;line-height:17px;text-align:right;color:#000;letter-spacing:0;">10,00</div>
<div class="a t" style="left:1269px;width:228px;overflow:hidden;top:358px;line-height:17px;color:#000;letter-spacing:-0.75px;">TESTES TRANSPORTADORA</div>
<div class="a" style="left:788px;top:392px;width:825px;height:1px;background:#a9a9a9"></div>
<div class="a t" style="left:788px;width:77px;top:376px;line-height:17px;text-align:right;color:#000;letter-spacing:0;">425</div>
<div class="a t" style="left:869px;width:98px;overflow:hidden;top:376px;line-height:17px;color:#000;letter-spacing:0;">14879/1</div>
<div class="a t" style="left:969px;width:98px;overflow:hidden;top:376px;line-height:17px;color:#000;letter-spacing:0;">19/08/2022</div>
<div class="a t" style="left:1069px;width:98px;overflow:hidden;top:376px;line-height:17px;color:#000;letter-spacing:0;">19/08/2022</div>
<div class="a t" style="left:1168px;width:97px;top:376px;line-height:17px;text-align:right;color:#000;letter-spacing:0;">2,00</div>
<div class="a t" style="left:1269px;width:228px;overflow:hidden;top:376px;line-height:17px;color:#000;letter-spacing:-0.75px;">TRANSPORTADORA</div>
<div class="a" style="left:788px;top:410px;width:825px;height:1px;background:#a9a9a9"></div>
<div class="a t" style="left:788px;width:77px;top:394px;line-height:17px;text-align:right;color:#000;letter-spacing:0;">426</div>
<div class="a t" style="left:869px;width:98px;overflow:hidden;top:394px;line-height:17px;color:#000;letter-spacing:0;">1031318/1</div>
<div class="a t" style="left:969px;width:98px;overflow:hidden;top:394px;line-height:17px;color:#000;letter-spacing:0;">19/08/2022</div>
<div class="a t" style="left:1069px;width:98px;overflow:hidden;top:394px;line-height:17px;color:#000;letter-spacing:0;">22/08/2022</div>
<div class="a t" style="left:1168px;width:97px;top:394px;line-height:17px;text-align:right;color:#000;letter-spacing:0;">20,00</div>
<div class="a t" style="left:1269px;width:228px;overflow:hidden;top:394px;line-height:17px;color:#000;letter-spacing:-0.75px;">TESTES TRANSPORTADORA</div>
<div class="a" style="left:788px;top:428px;width:825px;height:1px;background:#a9a9a9"></div>
<div class="a t" style="left:788px;width:77px;top:412px;line-height:17px;text-align:right;color:#000;letter-spacing:0;">427</div>
<div class="a t" style="left:869px;width:98px;overflow:hidden;top:412px;line-height:17px;color:#000;letter-spacing:0;">45879/1</div>
<div class="a t" style="left:969px;width:98px;overflow:hidden;top:412px;line-height:17px;color:#000;letter-spacing:0;">19/08/2022</div>
<div class="a t" style="left:1069px;width:98px;overflow:hidden;top:412px;line-height:17px;color:#000;letter-spacing:0;">19/08/2022</div>
<div class="a t" style="left:1168px;width:97px;top:412px;line-height:17px;text-align:right;color:#000;letter-spacing:0;">40,00</div>
<div class="a t" style="left:1269px;width:228px;overflow:hidden;top:412px;line-height:17px;color:#000;letter-spacing:-0.75px;">TRANSPORTADORA</div>
<div class="a" style="left:788px;top:446px;width:825px;height:1px;background:#a9a9a9"></div>
<div class="a t" style="left:788px;width:77px;top:430px;line-height:17px;text-align:right;color:#000;letter-spacing:0;">428</div>
<div class="a t" style="left:869px;width:98px;overflow:hidden;top:430px;line-height:17px;color:#000;letter-spacing:0;">47963/1</div>
<div class="a t" style="left:969px;width:98px;overflow:hidden;top:430px;line-height:17px;color:#000;letter-spacing:0;">19/08/2022</div>
<div class="a t" style="left:1069px;width:98px;overflow:hidden;top:430px;line-height:17px;color:#000;letter-spacing:0;">05/09/2022</div>
<div class="a t" style="left:1168px;width:97px;top:430px;line-height:17px;text-align:right;color:#000;letter-spacing:0;">60,00</div>
<div class="a t" style="left:1269px;width:228px;overflow:hidden;top:430px;line-height:17px;color:#000;letter-spacing:-0.75px;">TESTES TRANSPORTADORA</div>
<div class="a" style="left:788px;top:464px;width:825px;height:1px;background:#a9a9a9"></div>
<div class="a t" style="left:788px;width:77px;top:448px;line-height:17px;text-align:right;color:#000;letter-spacing:0;">430</div>
<div class="a t" style="left:869px;width:98px;overflow:hidden;top:448px;line-height:17px;color:#000;letter-spacing:0;">1031326/1</div>
<div class="a t" style="left:969px;width:98px;overflow:hidden;top:448px;line-height:17px;color:#000;letter-spacing:0;">29/08/2022</div>
<div class="a t" style="left:1069px;width:98px;overflow:hidden;top:448px;line-height:17px;color:#000;letter-spacing:0;">01/09/2022</div>
<div class="a t" style="left:1168px;width:97px;top:448px;line-height:17px;text-align:right;color:#000;letter-spacing:0;">10,00</div>
<div class="a t" style="left:1269px;width:228px;overflow:hidden;top:448px;line-height:17px;color:#000;letter-spacing:-0.75px;">TESTES TRANSPORTADORA</div>
<div class="a" style="left:788px;top:482px;width:825px;height:1px;background:#a9a9a9"></div>
<div class="a t" style="left:788px;width:77px;top:466px;line-height:17px;text-align:right;color:#000;letter-spacing:0;">432</div>
<div class="a t" style="left:869px;width:98px;overflow:hidden;top:466px;line-height:17px;color:#000;letter-spacing:0;">1031330/1</div>
<div class="a t" style="left:969px;width:98px;overflow:hidden;top:466px;line-height:17px;color:#000;letter-spacing:0;">01/09/2022</div>
<div class="a t" style="left:1069px;width:98px;overflow:hidden;top:466px;line-height:17px;color:#000;letter-spacing:0;">05/09/2022</div>
<div class="a t" style="left:1168px;width:97px;top:466px;line-height:17px;text-align:right;color:#000;letter-spacing:0;">6,00</div>
<div class="a t" style="left:1269px;width:228px;overflow:hidden;top:466px;line-height:17px;color:#000;letter-spacing:-0.75px;">TESTES TRANSPORTADORA</div>
<div class="a" style="left:788px;top:500px;width:825px;height:1px;background:#a9a9a9"></div>
<div class="a t" style="left:788px;width:77px;top:484px;line-height:17px;text-align:right;color:#000;letter-spacing:0;">434</div>
<div class="a t" style="left:869px;width:98px;overflow:hidden;top:484px;line-height:17px;color:#000;letter-spacing:0;">4579/1</div>
<div class="a t" style="left:969px;width:98px;overflow:hidden;top:484px;line-height:17px;color:#000;letter-spacing:0;">01/09/2022</div>
<div class="a t" style="left:1069px;width:98px;overflow:hidden;top:484px;line-height:17px;color:#000;letter-spacing:0;">01/09/2022</div>
<div class="a t" style="left:1168px;width:97px;top:484px;line-height:17px;text-align:right;color:#000;letter-spacing:0;">10,00</div>
<div class="a t" style="left:1269px;width:228px;overflow:hidden;top:484px;line-height:17px;color:#000;letter-spacing:-0.75px;">TRANSPORTADORA</div>
<div class="a" style="left:788px;top:518px;width:825px;height:1px;background:#a9a9a9"></div>
<div class="a t" style="left:788px;width:77px;top:502px;line-height:17px;text-align:right;color:#000;letter-spacing:0;">435</div>
<div class="a t" style="left:869px;width:98px;overflow:hidden;top:502px;line-height:17px;color:#000;letter-spacing:0;">999000027/1</div>
<div class="a t" style="left:969px;width:98px;overflow:hidden;top:502px;line-height:17px;color:#000;letter-spacing:0;">01/09/2022</div>
<div class="a t" style="left:1069px;width:98px;overflow:hidden;top:502px;line-height:17px;color:#000;letter-spacing:0;">05/09/2022</div>
<div class="a t" style="left:1168px;width:97px;top:502px;line-height:17px;text-align:right;color:#000;letter-spacing:0;">12,00</div>
<div class="a t" style="left:1269px;width:228px;overflow:hidden;top:502px;line-height:17px;color:#000;letter-spacing:-0.75px;">TESTES TRANSPORTADORA</div>
<div class="a" style="left:788px;top:536px;width:825px;height:1px;background:#a9a9a9"></div>
<div class="a t" style="left:788px;width:77px;top:520px;line-height:17px;text-align:right;color:#000;letter-spacing:0;">439</div>
<div class="a t" style="left:869px;width:98px;overflow:hidden;top:520px;line-height:17px;color:#000;letter-spacing:0;">999000034/1</div>
<div class="a t" style="left:969px;width:98px;overflow:hidden;top:520px;line-height:17px;color:#000;letter-spacing:0;">01/09/2022</div>
<div class="a t" style="left:1069px;width:98px;overflow:hidden;top:520px;line-height:17px;color:#000;letter-spacing:0;">05/09/2022</div>
<div class="a t" style="left:1168px;width:97px;top:520px;line-height:17px;text-align:right;color:#000;letter-spacing:0;">4,00</div>
<div class="a t" style="left:1269px;width:228px;overflow:hidden;top:520px;line-height:17px;color:#000;letter-spacing:-0.75px;">TESTES TRANSPORTADORA</div>
<div class="a" style="left:788px;top:554px;width:825px;height:1px;background:#a9a9a9"></div>
<div class="a t" style="left:788px;width:77px;top:538px;line-height:17px;text-align:right;color:#000;letter-spacing:0;">454</div>
<div class="a t" style="left:869px;width:98px;overflow:hidden;top:538px;line-height:17px;color:#000;letter-spacing:0;">20/1</div>
<div class="a t" style="left:969px;width:98px;overflow:hidden;top:538px;line-height:17px;color:#000;letter-spacing:0;">10/10/2023</div>
<div class="a t" style="left:1069px;width:98px;overflow:hidden;top:538px;line-height:17px;color:#000;letter-spacing:0;">10/10/2023</div>
<div class="a t" style="left:1168px;width:97px;top:538px;line-height:17px;text-align:right;color:#000;letter-spacing:0;">7,32</div>
<div class="a t" style="left:1269px;width:228px;overflow:hidden;top:538px;line-height:17px;color:#000;letter-spacing:-0.75px;">TRANSPORTADORA</div>
<div class="a" style="left:868px;top:249px;width:1px;height:306px;background:#a9a9a9"></div>
<div class="a" style="left:968px;top:249px;width:1px;height:306px;background:#a9a9a9"></div>
<div class="a" style="left:1068px;top:249px;width:1px;height:306px;background:#a9a9a9"></div>
<div class="a" style="left:1168px;top:249px;width:1px;height:306px;background:#a9a9a9"></div>
<div class="a" style="left:1268px;top:249px;width:1px;height:306px;background:#a9a9a9"></div>
<div class="a" style="left:1498px;top:249px;width:1px;height:306px;background:#a9a9a9"></div>
<div class="a" style="left:1612px;top:249px;width:1px;height:306px;background:#a9a9a9"></div>
<div class="a" style="left:788px;top:249px;width:1px;height:16px;border-left:1px dotted #333;box-sizing:border-box"></div>
<div class="a" style="left:788px;top:249px;width:80px;height:1px;border-top:1px dotted #555;box-sizing:border-box"></div>
<div class="a" style="left:868px;top:249px;width:744px;height:1px;border-top:1px dotted #e0a060;box-sizing:border-box"></div>
<div class="a" style="left:788px;top:264px;width:827px;height:18px;border:3px solid #e3141c"></div>
<div class="a" style="left:1412px;top:567px;width:96px;height:23px;background:#e5e5e5;border:1px solid #adadad"></div>
<svg class="a" style="left:1446px;top:574px" width="15" height="12"><path d="M1.5 6 L5 10 L13.5 1.5" stroke="#6aa88e" stroke-width="2.6" fill="none"/></svg>
<div class="a t" style="left:1465px;top:569px;line-height:21px"><u>O</u>k</div>
<div class="a" style="left:1517px;top:567px;width:96px;height:23px;background:#e5e5e5;border:1px solid #adadad"></div>
<svg class="a" style="left:1537px;top:574px" width="13" height="12"><path d="M1 1 L12 11 M12 1 L1 11" stroke="#e07050" stroke-width="2.4"/></svg>
<div class="a t" style="left:1555px;top:569px;line-height:21px"><u>C</u>ancelar</div>
</body></html>
